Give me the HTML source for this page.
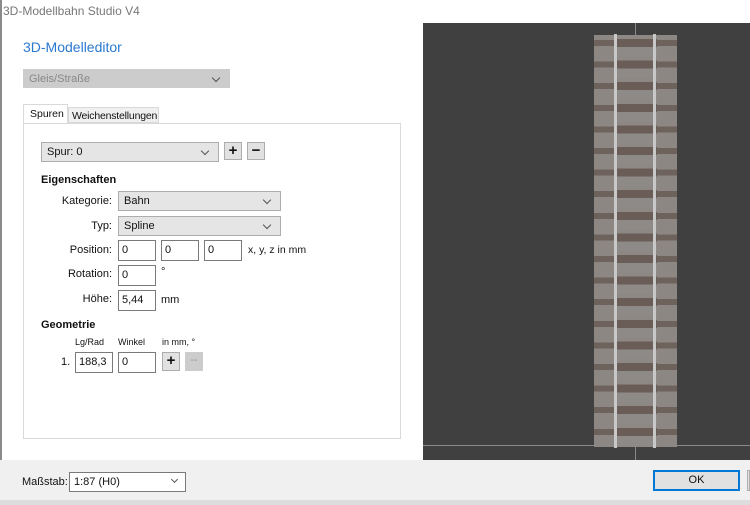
<!DOCTYPE html>
<html><head><style>
*{margin:0;padding:0;box-sizing:border-box}
body{width:750px;height:505px;overflow:hidden;background:#fff;font-family:"Liberation Sans",sans-serif;font-size:11px;color:#111;position:relative}
.a{position:absolute}
.box{position:absolute;border:1px solid #7a7a7a;background:#fff;height:21px;padding:3px 3px;font-size:11px}
.sel{position:absolute;border:1px solid #adadad;background:#e5e5e5;height:20px;padding:3px 5px;font-size:11px}
.sel:after{content:"";position:absolute;right:10px;top:5px;width:5px;height:5px;border-right:1px solid #555;border-bottom:1px solid #555;transform:rotate(45deg)}
.lbl{position:absolute;text-align:right;font-size:11px}
.btn{position:absolute;width:18px;height:18px;background:#e1e1e1;border:1px solid #adadad;text-align:center;font-weight:bold;font-size:15px;line-height:15px}
</style></head><body>
<div class="a" style="left:0;top:0;width:2px;height:460px;background:#8a8a8a"></div>
<div class="a" style="left:3px;top:4px;font-size:12px;color:#777">3D-Modellbahn Studio V4</div>
<div class="a" style="left:23px;top:39px;font-size:14px;color:#2b79d0">3D-Modelleditor</div>
<div class="sel" style="left:23px;top:69px;width:207px;height:19px;background:#ccc;border-color:#ccc;color:#888">Gleis/Straße</div>
<div class="a" style="left:23px;top:104px;width:45px;height:20px;background:#fff;border:1px solid #d9d9d9;border-bottom:none;padding:3px 0 0 6px;font-size:10.5px">Spuren</div>
<div class="a" style="left:68px;top:107px;width:91px;height:16px;background:#f0f0f0;border:1px solid #d9d9d9;padding:2px 0 0 3px;font-size:10.5px;letter-spacing:-0.2px">Weichenstellungen</div>
<div class="a" style="left:23px;top:123px;width:378px;height:316px;border:1px solid #d9d9d9;background:#fff"></div>
<div class="sel" style="left:41px;top:142px;width:178px">Spur: 0</div>
<div class="btn" style="left:224px;top:142px">+</div>
<div class="btn" style="left:247px;top:142px">−</div>
<div class="a" style="left:41px;top:174px;font-weight:bold">Eigenschaften</div>
<div class="lbl" style="left:40px;top:195px;width:72px">Kategorie:</div>
<div class="sel" style="left:118px;top:191px;width:163px">Bahn</div>
<div class="lbl" style="left:40px;top:220px;width:72px">Typ:</div>
<div class="sel" style="left:118px;top:216px;width:163px">Spline</div>
<div class="lbl" style="left:40px;top:244px;width:72px">Position:</div>
<div class="box" style="left:118px;top:240px;width:38px">0</div>
<div class="box" style="left:161px;top:240px;width:38px">0</div>
<div class="box" style="left:204px;top:240px;width:38px">0</div>
<div class="a" style="left:248px;top:244px;font-size:10.5px">x, y, z in mm</div>
<div class="lbl" style="left:40px;top:268px;width:72px">Rotation:</div>
<div class="box" style="left:118px;top:265px;width:38px">0</div>
<div class="a" style="left:161px;top:266px">°</div>
<div class="lbl" style="left:40px;top:293px;width:72px">Höhe:</div>
<div class="box" style="left:118px;top:290px;width:38px">5,44</div>
<div class="a" style="left:161px;top:294px">mm</div>
<div class="a" style="left:41px;top:319px;font-weight:bold">Geometrie</div>
<div class="a" style="left:75px;top:337px;font-size:9px">Lg/Rad</div>
<div class="a" style="left:118px;top:337px;font-size:9px">Winkel</div>
<div class="a" style="left:162px;top:337px;font-size:9px">in mm, °</div>
<div class="a" style="left:61px;top:356px">1.</div>
<div class="box" style="left:75px;top:352px;width:38px">188,3</div>
<div class="box" style="left:118px;top:352px;width:38px">0</div>
<div class="btn" style="left:162px;top:352px;height:19px">+</div>
<div class="btn" style="left:185px;top:352px;height:19px;background:#ccc;border-color:#ccc;color:#999;font-weight:normal;font-size:11px">--</div>
<div class="a" style="left:423px;top:23px;width:327px;height:437px;background:#404040"></div>
<div class="a" style="left:635px;top:23px;width:1px;height:437px;background:#8a8a8a"></div>
<div class="a" style="left:423px;top:445px;width:327px;height:1px;background:#8a8a8a"></div>
<div class="a" style="left:594px;top:35px;width:83px;height:412px;background:repeating-linear-gradient(180deg,#8e8884 0 4px,#6a5c57 4px 12px,#8e8a87 12px 21.6px)"></div>
<div class="a" style="left:594px;top:35px;width:20px;height:412px;background:repeating-linear-gradient(180deg,#8d8784 0 5px,#6e625c 5px 11px,#8d8784 11px 21.6px)"></div>
<div class="a" style="left:657px;top:35px;width:20px;height:412px;background:repeating-linear-gradient(180deg,#8d8784 0 5px,#6e625c 5px 11px,#8d8784 11px 21.6px)"></div>
<div class="a" style="left:614px;top:34px;width:3px;height:414px;background:#c8c8c8"></div>
<div class="a" style="left:653px;top:34px;width:3px;height:414px;background:#c8c8c8"></div>
<div class="a" style="left:0;top:460px;width:750px;height:40px;background:#f0f0f0"></div>
<div class="a" style="left:0;top:500px;width:750px;height:5px;background:#ddd"></div>
<div class="a" style="left:22px;top:476px">Maßstab:</div>
<div class="a" style="left:69px;top:472px;width:117px;height:20px;border:1px solid #7a7a7a;background:#fff;padding:3px 4px">1:87 (H0)</div>
<div class="a" style="left:172px;top:477px;width:5px;height:5px;border-right:1px solid #555;border-bottom:1px solid #555;transform:rotate(45deg)"></div>
<div class="a" style="left:653px;top:470px;width:87px;height:21px;border:2px solid #0078d7;background:#e1e1e1;text-align:center;line-height:17px">OK</div>
<div class="a" style="left:747px;top:470px;width:3px;height:21px;border:1px solid #adadad;background:#e1e1e1"></div>
</body></html>
